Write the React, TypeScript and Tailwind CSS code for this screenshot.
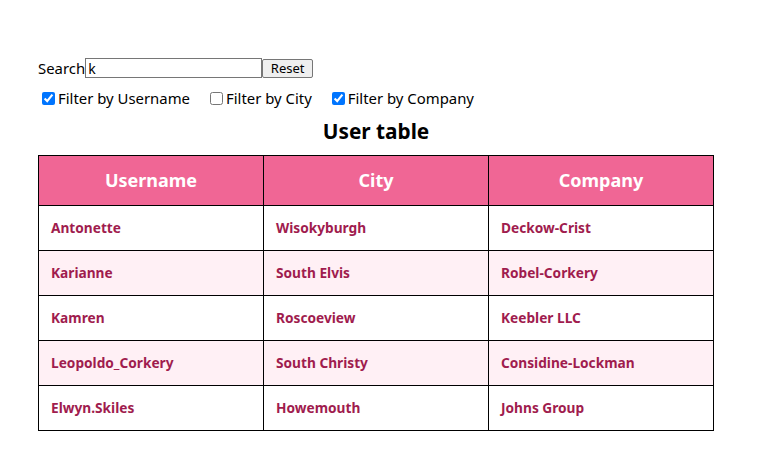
import React from "react";

const rows = [
  ["Antonette", "Wisokyburgh", "Deckow-Crist"],
  ["Karianne", "South Elvis", "Robel-Corkery"],
  ["Kamren", "Roscoeview", "Keebler LLC"],
  ["Leopoldo_Corkery", "South Christy", "Considine-Lockman"],
  ["Elwyn.Skiles", "Howemouth", "Johns Group"],
];

export default function App() {
  return (
    <div
      className="pt-[58px] pl-[38px] text-black bg-white min-h-[474px]"
      style={{ fontFamily: '"Noto Sans", "Open Sans", sans-serif' }}
    >
      <div className="flex items-center h-5 text-[14.9px]">
        <span className="leading-5">Search</span>
        <input
          className="w-[177px] h-5 border border-[#767676] px-[2px] text-[14px] leading-4 outline-none"
          defaultValue="k"
        />
        <button className="h-[19px] w-[51px] border border-[#767676] rounded-[2px] bg-[#efefef] text-[13px] leading-4">
          Reset
        </button>
      </div>
      <div className="flex items-center h-5 mt-[10px] text-[14.9px]">
        <label className="flex items-center mr-4">
          <input type="checkbox" defaultChecked className="w-[13px] h-[13px] ml-1 mr-[3px]" />
          <span>Filter by Username</span>
        </label>
        <label className="flex items-center mr-4">
          <input type="checkbox" className="w-[13px] h-[13px] ml-1 mr-[3px]" />
          <span>Filter by City</span>
        </label>
        <label className="flex items-center">
          <input type="checkbox" defaultChecked className="w-[13px] h-[13px] ml-1 mr-[3px]" />
          <span>Filter by Company</span>
        </label>
      </div>
      <h2 className="w-[676px] text-center text-[20.8px] font-bold h-[27px] leading-[27px] mt-[10px] mb-[10px]">
        User table
      </h2>
      <table className="w-[676px] border-collapse table-fixed">
        <thead>
          <tr className="bg-[#f06695] h-[50px]">
            <th className="border border-black text-white text-[18px] font-bold">Username</th>
            <th className="border border-black text-white text-[18px] font-bold">City</th>
            <th className="border border-black text-white text-[18px] font-bold">Company</th>
          </tr>
        </thead>
        <tbody>
          {rows.map((r, i) => (
            <tr key={i} className={i % 2 === 1 ? "bg-[#fff0f5] h-[45px]" : "bg-white h-[45px]"}>
              {r.map((c, j) => (
                <td key={j} className="border border-black pl-3 text-[13.7px] font-bold text-[#a01c4e] text-left">
                  {c}
                </td>
              ))}
            </tr>
          ))}
        </tbody>
      </table>
    </div>
  );
}
